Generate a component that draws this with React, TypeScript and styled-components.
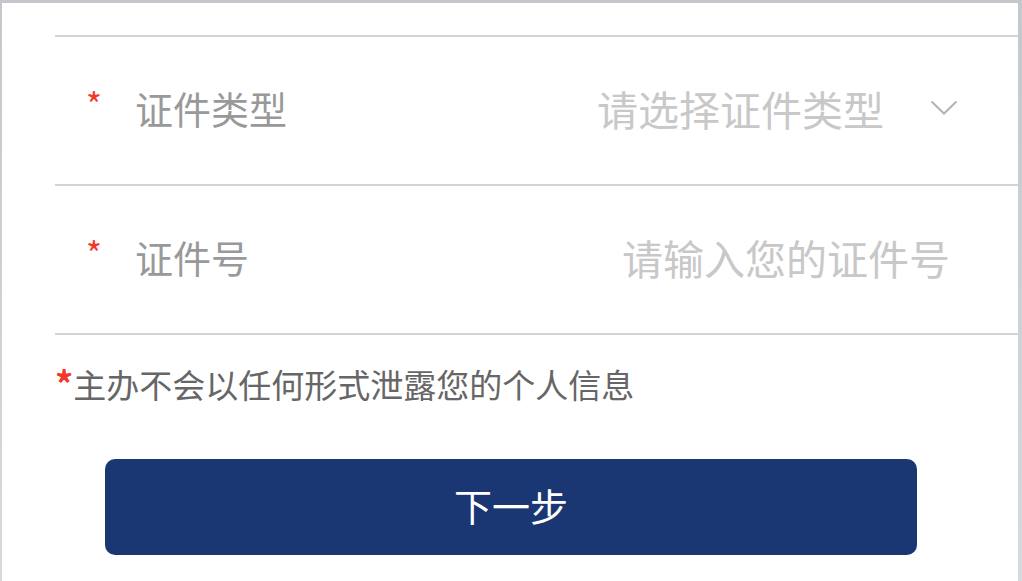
import React from "react";
import styled, { createGlobalStyle } from "styled-components";

const GlobalStyle = createGlobalStyle`
  html, body {
    margin: 0;
    padding: 0;
    background: #cfd3d8;
  }
  body {
    font-family: "Noto Sans CJK SC", "Noto Sans", sans-serif;
    overflow: hidden;
  }
`;

const Frame = styled.div`
  width: 1022px;
  height: 581px;
  box-sizing: border-box;
  padding: 3px 4px 0 2px;
  background: linear-gradient(#c4c8cd, #d6d9dd);
`;

const Screen = styled.div`
  height: 100%;
  background: #ffffff;
  padding-top: 32px;
  box-sizing: border-box;
  display: flex;
  flex-direction: column;
`;

const FormList = styled.div`
  margin-left: 53px;
  border-top: 2px solid #d3d3d3;
`;

const Row = styled.div`
  height: 149px;
  box-sizing: border-box;
  border-bottom: 2px solid #d3d3d3;
  display: flex;
  align-items: center;
  padding: 0 60px 5px 31px;
`;

const Required = styled.span`
  color: #f0392b;
  font-size: 34px;
  width: 49px;
  line-height: 1;
  margin-top: -8px;
`;

const Label = styled.span`
  color: #999999;
  font-size: 38px;
  line-height: 1;
  flex: 0 0 auto;
`;

const Value = styled.span<{ $withArrow?: boolean }>`
  margin-left: auto;
  color: #c8c8c8;
  font-size: 41px;
  line-height: 1;
  margin-right: ${(p) => (p.$withArrow ? "0" : "8px")};
`;

const Arrow = styled.svg`
  margin-left: 46px;
  width: 28px;
  height: 16px;
  flex: 0 0 auto;
`;

const Notice = styled.p`
  margin: 27px 0 0 53px;
  color: #666666;
  font-size: 33px;
  line-height: 40px;
`;

const Star = styled.span`
  color: #f0392b;
  font-weight: 700;
  font-size: 36px;
`;

const NextButton = styled.button`
  margin: 55px 0 0 103px;
  width: 812px;
  height: 96px;
  border: none;
  border-radius: 10px;
  background: #1a3773;
  color: #ffffff;
  font-family: "Noto Sans CJK SC", "Noto Sans", sans-serif;
  font-size: 38px;
  display: flex;
  align-items: center;
  justify-content: center;
  padding: 0 0 6px;
`;

export default function App() {
  return (
    <>
      <GlobalStyle />
      <Frame>
        <Screen>
          <FormList>
            <Row>
              <Required>*</Required>
              <Label>证件类型</Label>
              <Value $withArrow>请选择证件类型</Value>
              <Arrow viewBox="0 0 28 16" fill="none">
                <path d="M1.5 1.5 L14 13.5 L26.5 1.5" stroke="#b3b3b3" strokeWidth="2" />
              </Arrow>
            </Row>
            <Row>
              <Required>*</Required>
              <Label>证件号</Label>
              <Value>请输入您的证件号</Value>
            </Row>
          </FormList>
          <Notice>
            <Star>*</Star>主办不会以任何形式泄露您的个人信息
          </Notice>
          <NextButton>下一步</NextButton>
        </Screen>
      </Frame>
    </>
  );
}
